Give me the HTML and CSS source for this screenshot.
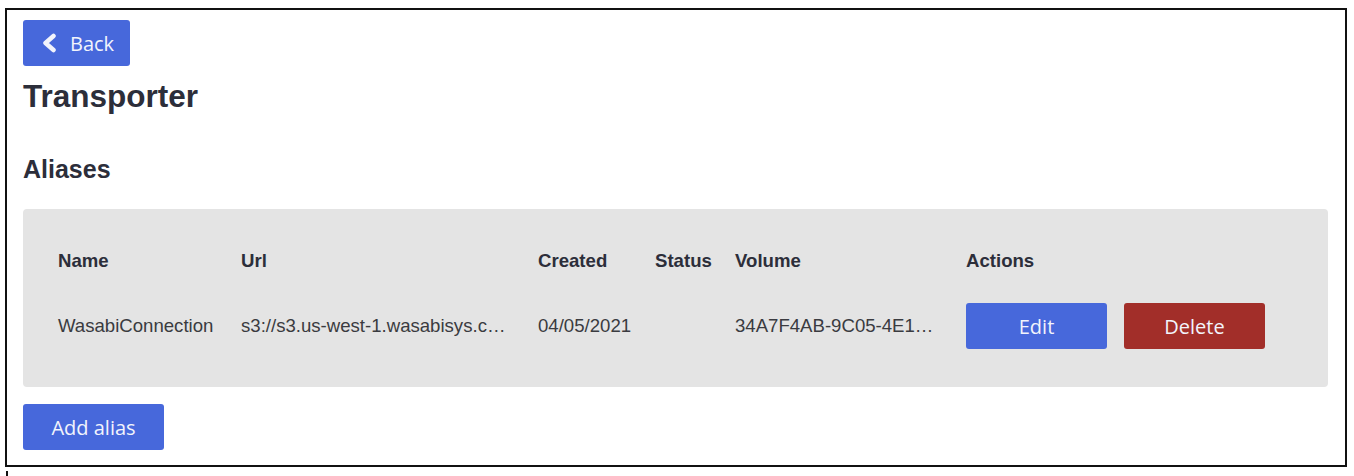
FILE: index.html
```html
<!DOCTYPE html>
<html lang="en">
<head>
<meta charset="UTF-8" />
<meta name="viewport" content="width=device-width, initial-scale=1" />
<title>Transporter</title>
<link rel="stylesheet" href="styles.css">
</head>
<body>

<div class="frame">
  <a href="#" class="btn btn-back">
    <svg class="chevron" width="16" height="20" viewBox="0 0 16 20" aria-hidden="true">
      <polyline points="12.5,3 4.5,10 12.5,17" fill="none" stroke="currentColor" stroke-width="4.5" stroke-linecap="round" stroke-linejoin="round"/>
    </svg>
    <span>Back</span>
  </a>

  <h1>Transporter</h1>

  <h2>Aliases</h2>

  <div class="panel">
    <div class="alias-table">
      <div class="th">Name</div>
      <div class="th">Url</div>
      <div class="th">Created</div>
      <div class="th">Status</div>
      <div class="th">Volume</div>
      <div class="th">Actions</div>

      <div class="td">WasabiConnection</div>
      <div class="td"><span class="trunc url">s3://s3.us-west-1.wasabisys.com/transporter</span></div>
      <div class="td">04/05/2021</div>
      <div class="td"></div>
      <div class="td"><span class="trunc volume">34A7F4AB-9C05-4E1D-8B2A-6F3C9E0D1A57</span></div>
      <div class="td actions">
        <a href="#" class="btn btn-wide">Edit</a>
        <a href="#" class="btn btn-wide btn-danger">Delete</a>
      </div>
    </div>
  </div>

  <a href="#" class="btn btn-wide btn-add">Add alias</a>
</div>
<div class="tick"></div>

</body>
</html>
```

FILE: styles.css
```css
/* Basic Reset */
* {
  margin: 0; padding: 0; box-sizing: border-box;
}
body {
  font-family: 'Liberation Sans', Arial, sans-serif;
  background: #fff;
  color: #2c2e3a;
}
.frame {
  margin: 8px 0 0 5px;
  width: 1342px;
  height: 459px;
  border: 2px solid #111;
  padding: 10px 17px 0 16px;
}
.tick {
  margin: 4px 0 0 6px;
  width: 2px;
  height: 5px;
  background: #111;
}
/* Buttons */
.btn {
  display: inline-flex;
  align-items: center;
  justify-content: center;
  height: 46px;
  background: #4768db;
  color: #f2f4fc;
  font-family: 'Open Sans', sans-serif;
  font-size: 20px;
  text-decoration: none;
  border-radius: 3px;
}
.btn-back {
  padding: 0 16px 0 18px;
  gap: 13px;
}
.chevron {
  display: block;
}
.btn-wide {
  width: 141px;
}
.btn-danger {
  background: #a22e29;
}
.btn-add {
  margin-top: 17px;
}
h1 {
  font-size: 31.5px;
  line-height: 36px;
  margin-top: 12px;
}
h2 {
  font-size: 25px;
  line-height: 28px;
  margin-top: 41px;
}
/* Aliases table */
.panel {
  margin-top: 26px;
  background: #e4e4e4;
  border-radius: 4px;
  padding: 36px 35px 38px;
}
.alias-table {
  display: grid;
  grid-template-columns: 183px 297px 117px 80px 231px 1fr;
  grid-template-rows: 32px 46px;
  row-gap: 26px;
  align-items: center;
  font-size: 18.6px;
}
.th {
  font-weight: bold;
  color: #2c2e3a;
}
.td {
  color: #3a3b40;
  min-width: 0;
}
.trunc {
  display: block;
  overflow: hidden;
  white-space: nowrap;
  text-overflow: ellipsis;
}
.url {
  max-width: 274px;
}
.volume {
  max-width: 205px;
}
.actions {
  display: flex;
  gap: 17px;
}
```
